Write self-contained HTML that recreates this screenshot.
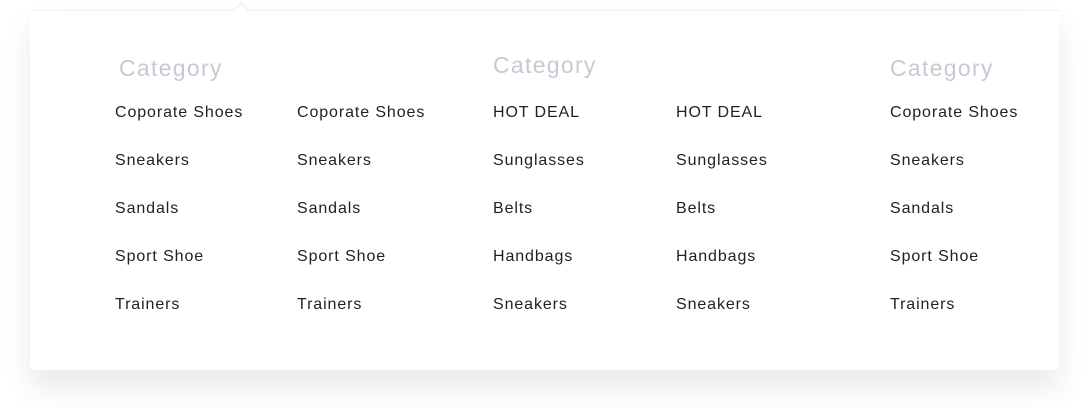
<!DOCTYPE html>
<html><head><meta charset="utf-8"><style>
html,body{margin:0;padding:0;width:1090px;height:409px;background:#fff;overflow:hidden;font-family:"Liberation Sans",sans-serif;}
.panel{position:absolute;left:30px;top:10px;width:1029px;height:359px;background:#fff;border-top:1px solid #eceef1;border-radius:0 0 4px 4px;box-shadow:0 18px 30px rgba(0,0,0,0.09);}
.arrow{position:absolute;left:232px;top:2px;width:0;height:0;border-left:9px solid transparent;border-right:9px solid transparent;border-bottom:9px solid #eef0f3;}
.arrow2{position:absolute;left:233px;top:4px;width:0;height:0;border-left:8px solid transparent;border-right:8px solid transparent;border-bottom:8px solid #fff;}
.t{position:absolute;font-size:16px;color:#222;letter-spacing:0.9px;line-height:20px;white-space:nowrap;}
.h{position:absolute;font-size:23px;color:#c5cad3;letter-spacing:1.3px;line-height:26px;white-space:nowrap;}
</style></head><body>
<div class="panel"></div>
<div class="arrow"></div><div class="arrow2"></div>
<div class="h" style="left:119px;top:55px">Category</div>
<div class="h" style="left:493px;top:52px">Category</div>
<div class="h" style="left:890px;top:55px">Category</div>

<div class="t" style="left:115px;top:103px">Coporate Shoes</div>
<div class="t" style="left:115px;top:151px">Sneakers</div>
<div class="t" style="left:115px;top:199px">Sandals</div>
<div class="t" style="left:115px;top:247px">Sport Shoe</div>
<div class="t" style="left:115px;top:295px">Trainers</div>

<div class="t" style="left:297px;top:103px">Coporate Shoes</div>
<div class="t" style="left:297px;top:151px">Sneakers</div>
<div class="t" style="left:297px;top:199px">Sandals</div>
<div class="t" style="left:297px;top:247px">Sport Shoe</div>
<div class="t" style="left:297px;top:295px">Trainers</div>

<div class="t" style="left:493px;top:103px">HOT DEAL</div>
<div class="t" style="left:493px;top:151px">Sunglasses</div>
<div class="t" style="left:493px;top:199px">Belts</div>
<div class="t" style="left:493px;top:247px">Handbags</div>
<div class="t" style="left:493px;top:295px">Sneakers</div>

<div class="t" style="left:676px;top:103px">HOT DEAL</div>
<div class="t" style="left:676px;top:151px">Sunglasses</div>
<div class="t" style="left:676px;top:199px">Belts</div>
<div class="t" style="left:676px;top:247px">Handbags</div>
<div class="t" style="left:676px;top:295px">Sneakers</div>

<div class="t" style="left:890px;top:103px">Coporate Shoes</div>
<div class="t" style="left:890px;top:151px">Sneakers</div>
<div class="t" style="left:890px;top:199px">Sandals</div>
<div class="t" style="left:890px;top:247px">Sport Shoe</div>
<div class="t" style="left:890px;top:295px">Trainers</div>
</body></html>
